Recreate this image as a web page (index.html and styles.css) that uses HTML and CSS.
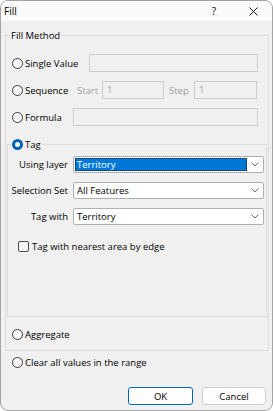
FILE: index.html
```html
<!DOCTYPE html>
<html>
<head>
<meta charset="utf-8">
<link rel="stylesheet" href="styles.css">
</head>
<body>
<div class="window">
  <div class="titlebar">
    <span class="title">Fill</span>
    <span class="help">?</span>
    <svg class="close" width="9" height="9" viewBox="0 0 9 9"><path d="M0.5 0.5 L8.5 8.5 M8.5 0.5 L0.5 8.5" stroke="#1a1a1a" stroke-width="1" fill="none"/></svg>
  </div>
  <div class="body">
    <fieldset class="group fill-group">
      <legend class="legend-fill">Fill Method</legend>
      <div class="row">
        <label class="opt w-single"><span class="rb"></span>Single Value</label>
        <span class="edit e-single"></span>
      </div>
      <div class="row gap">
        <label class="opt w-seq"><span class="rb"></span>Sequence</label>
        <span class="dlabel w-start">Start</span>
        <span class="edit e-start">1</span>
        <span class="dlabel w-step">Step</span>
        <span class="edit e-step">1</span>
      </div>
      <div class="row gap">
        <label class="opt w-formula"><span class="rb"></span>Formula</label>
        <span class="edit e-formula"></span>
      </div>
      <fieldset class="group tag-group">
        <legend class="legend-tag"><span class="opt"><span class="rb on"></span>Tag</span></legend>
        <div class="crow">
          <span class="clabel">Using layer</span>
          <div class="combo"><span class="sel">Territory</span><svg class="chev" width="8" height="5" viewBox="0 0 8 5"><path d="M0.5 0.5 L4 4 L7.5 0.5" stroke="#6b6b6b" fill="none"/></svg></div>
        </div>
        <div class="crow cgap">
          <span class="clabel">Selection Set</span>
          <div class="combo"><span class="ctext">All Features</span><svg class="chev" width="8" height="5" viewBox="0 0 8 5"><path d="M0.5 0.5 L4 4 L7.5 0.5" stroke="#6b6b6b" fill="none"/></svg></div>
        </div>
        <div class="crow cgap">
          <span class="clabel">Tag with</span>
          <div class="combo"><span class="ctext">Territory</span><svg class="chev" width="8" height="5" viewBox="0 0 8 5"><path d="M0.5 0.5 L4 4 L7.5 0.5" stroke="#6b6b6b" fill="none"/></svg></div>
        </div>
        <div class="checkrow">
          <span class="cb"></span>Tag with nearest area by edge
        </div>
      </fieldset>
      <div class="row small agg">
        <label class="opt"><span class="rb"></span>Aggregate</label>
      </div>
    </fieldset>
    <div class="row small clear">
      <label class="opt"><span class="rb"></span>Clear all values in the range</label>
    </div>
    <div class="buttons">
      <button class="btn default">OK</button>
      <button class="btn">Cancel</button>
    </div>
  </div>
</div>
</body>
</html>
```

FILE: styles.css
```css
html, body {
  margin: 0;
  padding: 0;
  background: #ffffff;
}
body {
  font-family: "Open Sans", "Noto Sans", sans-serif;
  font-size: 9.5px;
  color: #000;
}
.window {
  width: 273px;
  height: 411px;
  box-sizing: border-box;
  border: 1px solid #a3a3a3;
  border-radius: 8px;
  background: #f0f0f0;
  overflow: hidden;
  display: flex;
  flex-direction: column;
}
.titlebar {
  height: 20px;
  background: #fafafa;
  display: flex;
  align-items: center;
  padding-left: 3px;
  flex: none;
}
.title {
  flex: 1;
  font-size: 10px;
}
.help {
  margin-right: 33px;
  font-size: 10px;
}
.close {
  margin-right: 14px;
}
.body {
  padding: 7px 3px 0 4px;
}
.group {
  margin: 0;
  border: 1px solid #dcdcdc;
  min-width: 0;
}
.fill-group {
  padding: 11px 1px 9px 1px;
}
legend {
  line-height: 15px;
  height: 15px;
  padding: 0 1px;
}
.legend-fill {
  margin-left: 3px;
}
.row {
  display: flex;
  align-items: center;
  height: 18px;
  padding-left: 5px;
}
.row.gap {
  margin-top: 9px;
}
.row.small {
  height: 14px;
}
.agg {
  margin-top: 10px;
}
.clear {
  margin-top: 4px;
  padding-left: 7px;
}
.opt {
  display: flex;
  align-items: center;
  flex: none;
}
.rb {
  width: 11px;
  height: 11px;
  box-sizing: border-box;
  border: 1px solid #3c3c3c;
  border-radius: 50%;
  margin-right: 2px;
  background: #f7f7f7;
}
.rb.on {
  border: 3px solid #005fb8;
  background: #ffffff;
}
.w-single { width: 77px; }
.w-seq { width: 65px; }
.w-formula { width: 61px; }
.dlabel {
  color: #a0a0a0;
  flex: none;
}
.w-start { width: 25px; }
.w-step { width: 25px; padding-left: 5px; }
.edit {
  height: 18px;
  box-sizing: border-box;
  border: 1px solid #cccccc;
  background: #f0f0f0;
  color: #a0a0a0;
  padding-left: 4px;
  line-height: 16px;
  flex: none;
}
.e-single { width: 169px; }
.e-start { width: 62px; }
.e-step { width: 63px; }
.e-formula { width: 185px; }
.tag-group {
  margin-top: 11px;
  padding: 4px 2px 63px 3px;
}
.legend-tag {
  margin-left: 0;
}
.crow {
  display: flex;
  align-items: center;
  height: 17px;
}
.cgap {
  margin-top: 9px;
}
.clabel {
  width: 57px;
  text-align: right;
  margin-right: 5px;
  flex: none;
}
.combo {
  width: 191px;
  height: 17px;
  box-sizing: border-box;
  border: 1px solid #b0b0b0;
  background: #ffffff;
  display: flex;
  align-items: center;
  border-radius: 2px;
}
.ctext {
  flex: 1;
  padding-left: 3px;
}
.sel {
  width: 172px;
  height: 13px;
  box-sizing: border-box;
  margin-left: 1px;
  border: 1px dotted #1a1a1a;
  background: #0078d7;
  color: #ffffff;
  padding-left: 1px;
  line-height: 11px;
}
.chev {
  margin-left: auto;
  margin-right: 4px;
}
.checkrow {
  display: flex;
  align-items: center;
  height: 14px;
  margin-top: 14px;
  padding-left: 7px;
}
.cb {
  width: 11px;
  height: 11px;
  box-sizing: border-box;
  border: 1px solid #4a4a4a;
  border-radius: 2px;
  background: #f7f7f7;
  margin-right: 3px;
}
.buttons {
  display: flex;
  justify-content: flex-end;
  gap: 9px;
  margin-top: 18px;
  padding-right: 3px;
}
.btn {
  width: 64px;
  height: 18px;
  box-sizing: border-box;
  border: 1px solid #d0d0d0;
  border-radius: 3px;
  background: #fdfdfd;
  font-family: inherit;
  font-size: 9.5px;
  color: #000;
  padding: 0;
}
.btn.default {
  width: 65px;
  border: 1px solid #0067c0;
}
```
